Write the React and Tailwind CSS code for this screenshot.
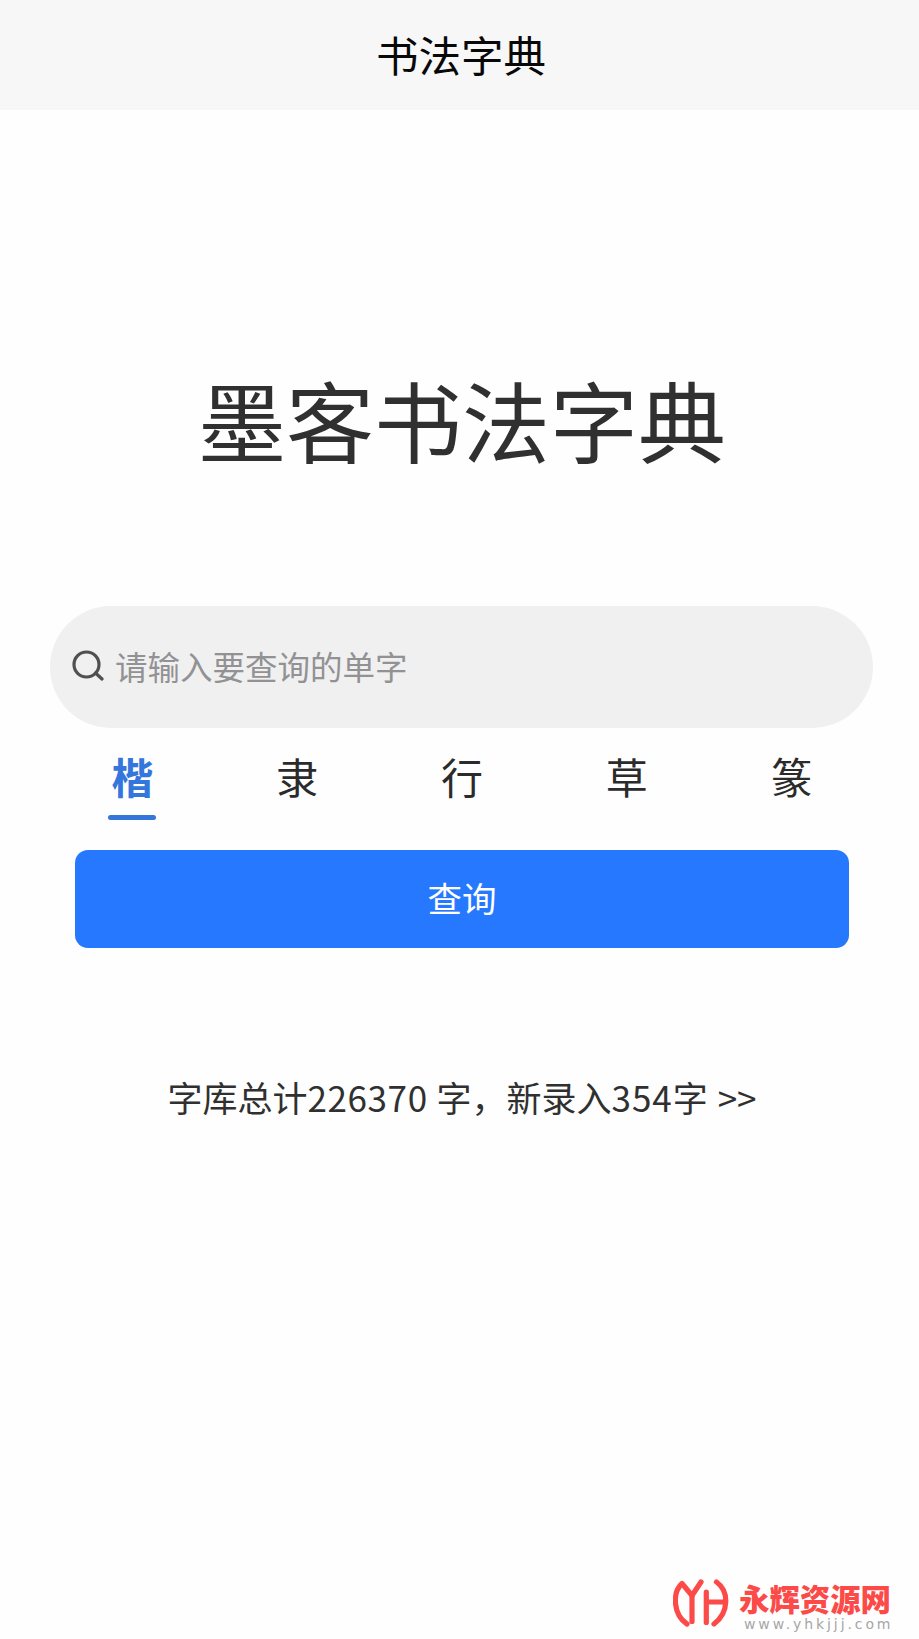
import { useState } from 'react'

const tabs = ['楷', '隶', '行', '草', '篆']

function SearchIcon() {
  return (
    <svg className="-mt-1" width="32" height="32" viewBox="0 0 32 32" fill="none" stroke="#505052" strokeWidth="3.2" strokeLinecap="round">
      <circle cx="14.5" cy="15.5" r="12.5" />
      <path d="M23.5 24L30 30" />
    </svg>
  )
}

function SiteLogo() {
  return (
    <svg width="56" height="50" viewBox="0 0 56 50" fill="none" stroke="#fb4a48" strokeWidth="5.2" strokeLinecap="round" strokeLinejoin="round">
      <path d="M14 45C-0.5 35 -0.5 13 9 4.5L19 16.5V42.5" />
      <path d="M28 3L19 16.5" />
      <path d="M33.3 13V43.5M33.3 23H52" />
      <path d="M43.5 3C56 12 56.5 33 41 45" />
    </svg>
  )
}

/** Style switcher, the active script gets a short underline. */
function Tabs({ active, onChange }) {
  return (
    <div className="flex ml-[50px] mr-[45px]">
      {tabs.map((tab) => (
        <button
          key={tab}
          onClick={() => onChange(tab)}
          className={`flex-1 flex flex-col items-center text-[42px] leading-[60px] ${
            tab === active ? 'font-bold text-[#3476dc]' : 'text-[#2b2b2b]'
          }`}
        >
          {tab}
          {tab === active && <span className="w-12 h-[5px] mt-[9px] rounded-full bg-[#3476dc]" />}
        </button>
      ))}
    </div>
  )
}

export default function App() {
  const [active, setActive] = useState('楷')

  return (
    <div className="min-h-[1639px] flex flex-col bg-[#fefefe] font-['Noto_Sans_CJK_SC',sans-serif] text-[#303030]">
      <header className="h-[110px] shrink-0 flex items-center justify-center bg-[#f7f7f7]">
        <h1 className="text-[42.5px] leading-[60px] text-[#080808] pl-[3px] pb-[2px]">书法字典</h1>
      </header>

      <main className="flex flex-col">
        <h2 className="mt-[243px] text-[88px] leading-[130px] text-center pl-[5px]">墨客书法字典</h2>

        <div className="mt-[123px] ml-[50px] mr-[46px] h-[122px] flex items-center rounded-full bg-[#f0f0f0] pl-[22px]">
          <SearchIcon />
          <span className="ml-[11px] pb-[3px] text-[32.5px] leading-[48px] text-[#929294]">请输入要查询的单字</span>
        </div>

        <div className="mt-[18px] h-[75px]">
          <Tabs active={active} onChange={setActive} />
        </div>

        <button className="mt-[29px] ml-[75px] mr-[70px] h-[98px] rounded-[13px] bg-[#2678fe] text-white text-[34.5px] leading-[50px] pb-1">
          查询
        </button>

        <p className="mt-[123px] text-[35px] leading-[52px] text-center pl-[5px] whitespace-nowrap">
          字库总计<span className="tracking-[0.6px]">226370</span>
          <span className="ml-px"> 字，新录入</span>
          <span className="tracking-[1px]">354</span>字<span className="ml-[2px]"> &gt;&gt;</span>
        </p>
      </main>

      <footer className="mt-auto flex justify-end items-start h-[60px] pr-[26px]">
        <SiteLogo />
        <div className="ml-[10px] w-[154px]">
          <div className="pt-[2px] text-[30.4px] leading-[34px] font-black text-[#fb4a48] whitespace-nowrap">永辉资源网</div>
          <div className="ml-[5px] pt-[2px] font-['DejaVu_Sans',sans-serif] text-[14px] leading-[15px] tracking-[2.9px] text-[#a6a6a6] whitespace-nowrap">
            www.yhkjjj.com
          </div>
        </div>
      </footer>
    </div>
  )
}
